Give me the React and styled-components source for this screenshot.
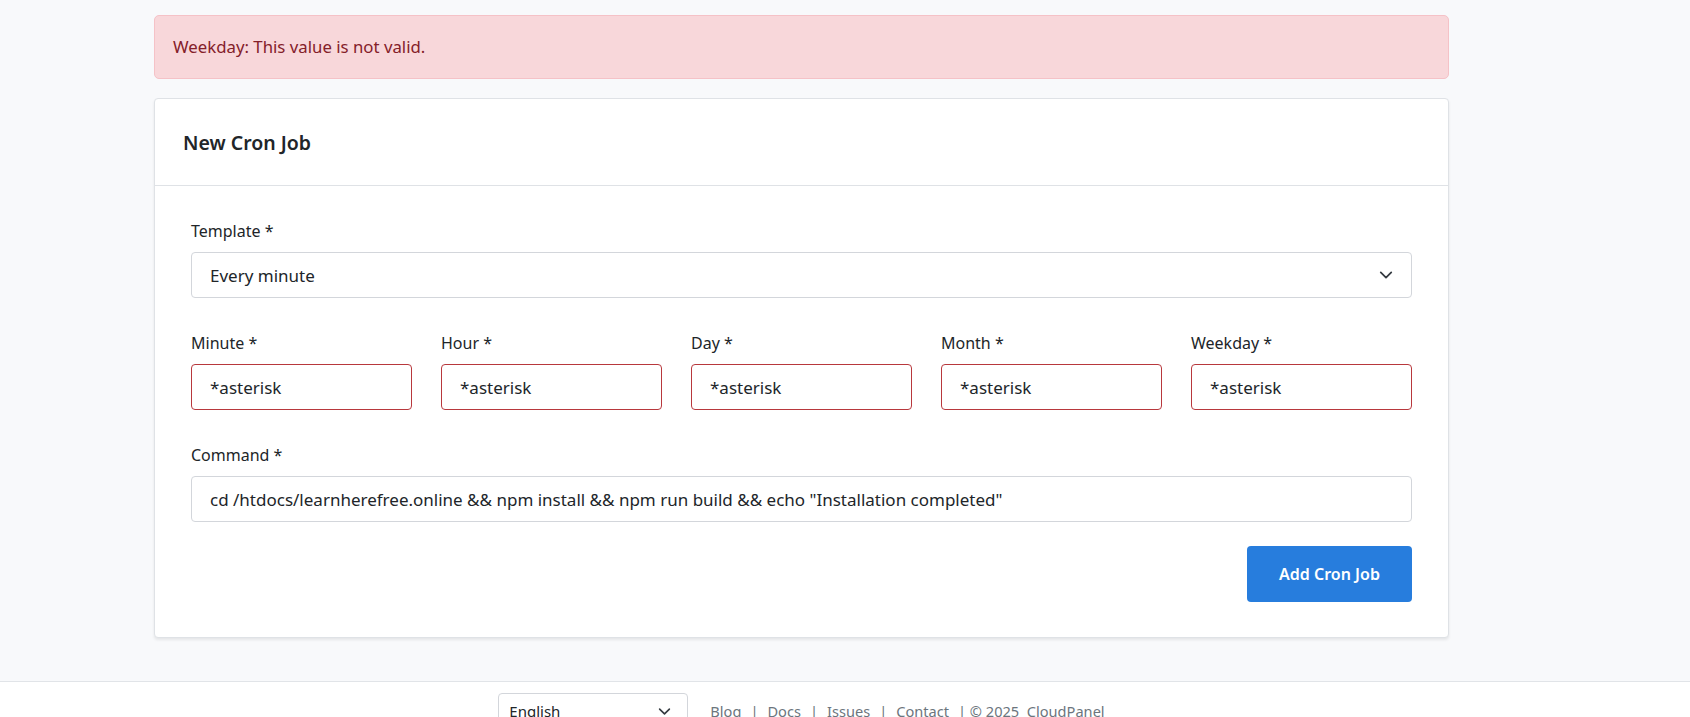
import React from 'react';
import styled, { createGlobalStyle } from 'styled-components';

const GlobalStyle = createGlobalStyle`
  html, body {
    margin: 0;
    padding: 0;
    background: #f8f9fb;
    font-family: "Noto Sans", "Open Sans", Arial, sans-serif;
    color: #212529;
  }
  * {
    box-sizing: border-box;
  }
`;

const Page = styled.div`
  min-height: 717px;
  display: flex;
  flex-direction: column;
`;

const Main = styled.main`
  width: 1295px;
  margin: 15px 0 0 154px;
  display: flex;
  flex-direction: column;
  gap: 19px;
`;

const Alert = styled.div`
  background: #f8d7da;
  border: 1px solid #f5c2c7;
  border-radius: 5px;
  color: #842029;
  padding: 19px 18px;
  font-size: 16.8px;
  line-height: 24px;
`;

const Card = styled.section`
  background: #fff;
  border: 1px solid #dfe2e6;
  border-radius: 4px;
  box-shadow: 0 2px 3px rgba(0, 0, 0, 0.08);
`;

const CardHeader = styled.header`
  height: 87px;
  padding: 0 28px;
  display: flex;
  align-items: center;
  border-bottom: 1px solid #dfe2e6;
  font-size: 19.5px;
  font-weight: 600;
  color: #212529;
`;

const CardBody = styled.form`
  padding: 33px 36px 35px;
  display: flex;
  flex-direction: column;
`;

const Group = styled.div`
  display: flex;
  flex-direction: column;
  margin-bottom: ${p => p.$mb ?? 33}px;
`;

const Label = styled.label`
  font-size: 16px;
  line-height: 24px;
  margin-bottom: 9px;
  color: #212529;
`;

const Field = styled.div`
  height: 46px;
  border: 1px solid ${p => (p.$invalid ? '#b8383d' : '#d3d6db')};
  border-radius: 4px;
  background: #fff;
  padding: 0 18px;
  display: flex;
  align-items: center;
  justify-content: space-between;
  font-size: 17px;
  color: #212529;
  white-space: nowrap;
`;

const TimeRow = styled.div`
  display: grid;
  grid-template-columns: repeat(5, 1fr);
  column-gap: 29px;
  margin-bottom: 33px;
`;

const Actions = styled.div`
  display: flex;
  justify-content: flex-end;
  margin-top: -9px;
`;

const Button = styled.button`
  width: 165px;
  height: 56px;
  border: 0;
  border-radius: 4px;
  background: #277ddd;
  color: #fff;
  font-family: inherit;
  font-size: 16px;
  font-weight: 600;
`;

const Footer = styled.footer`
  margin-top: auto;
  height: 36px;
  background: #fff;
  border-top: 1px solid #e1e4e8;
  display: flex;
`;

const FooterInner = styled.div`
  width: 1295px;
  margin-left: 154px;
  padding-top: 11px;
  display: flex;
  justify-content: center;
  align-items: flex-start;
  gap: 22px;
`;

const LangSelect = styled.div`
  width: 190px;
  height: 36px;
  border: 1px solid #d3d6db;
  border-radius: 4px;
  padding: 0 16px 0 10px;
  display: flex;
  justify-content: space-between;
  align-items: center;
  font-size: 15px;
  color: #212529;
`;

const Links = styled.div`
  display: flex;
  gap: 9px;
  padding-top: 8px;
  font-size: 14.6px;
  color: #6c757d;
  white-space: pre;
`;

const Chevron = ({ size = 14 }) => (
  <svg width={size} height={size} viewBox="0 0 16 16" fill="none">
    <path d="M2 5l6 6 6-6" stroke="#343a40" strokeWidth="2" strokeLinecap="round" strokeLinejoin="round" />
  </svg>
);

const fields = ['Minute', 'Hour', 'Day', 'Month', 'Weekday'];

export default function App() {
  return (
    <Page>
      <GlobalStyle />
      <Main>
        <Alert>Weekday: This value is not valid.</Alert>
        <Card>
          <CardHeader>New Cron Job</CardHeader>
          <CardBody onSubmit={e => e.preventDefault()}>
            <Group>
              <Label>Template *</Label>
              <Field>
                <span>Every minute</span>
                <Chevron />
              </Field>
            </Group>
            <TimeRow>
              {fields.map(name => (
                <Group key={name} $mb={0}>
                  <Label>{name} *</Label>
                  <Field $invalid>*asterisk</Field>
                </Group>
              ))}
            </TimeRow>
            <Group>
              <Label>Command *</Label>
              <Field>cd /htdocs/learnherefree.online &amp;&amp; npm install &amp;&amp; npm run build &amp;&amp; echo "Installation completed"</Field>
            </Group>
            <Actions>
              <Button type="submit">Add Cron Job</Button>
            </Actions>
          </CardBody>
        </Card>
      </Main>
      <Footer>
        <FooterInner>
          <LangSelect>
            <span>English</span>
            <Chevron size={13} />
          </LangSelect>
          <Links>
            <span>Blog</span>|<span>Docs</span>|<span>Issues</span>|<span>Contact</span>
            <span>| © 2025  CloudPanel</span>
          </Links>
        </FooterInner>
      </Footer>
    </Page>
  );
}
